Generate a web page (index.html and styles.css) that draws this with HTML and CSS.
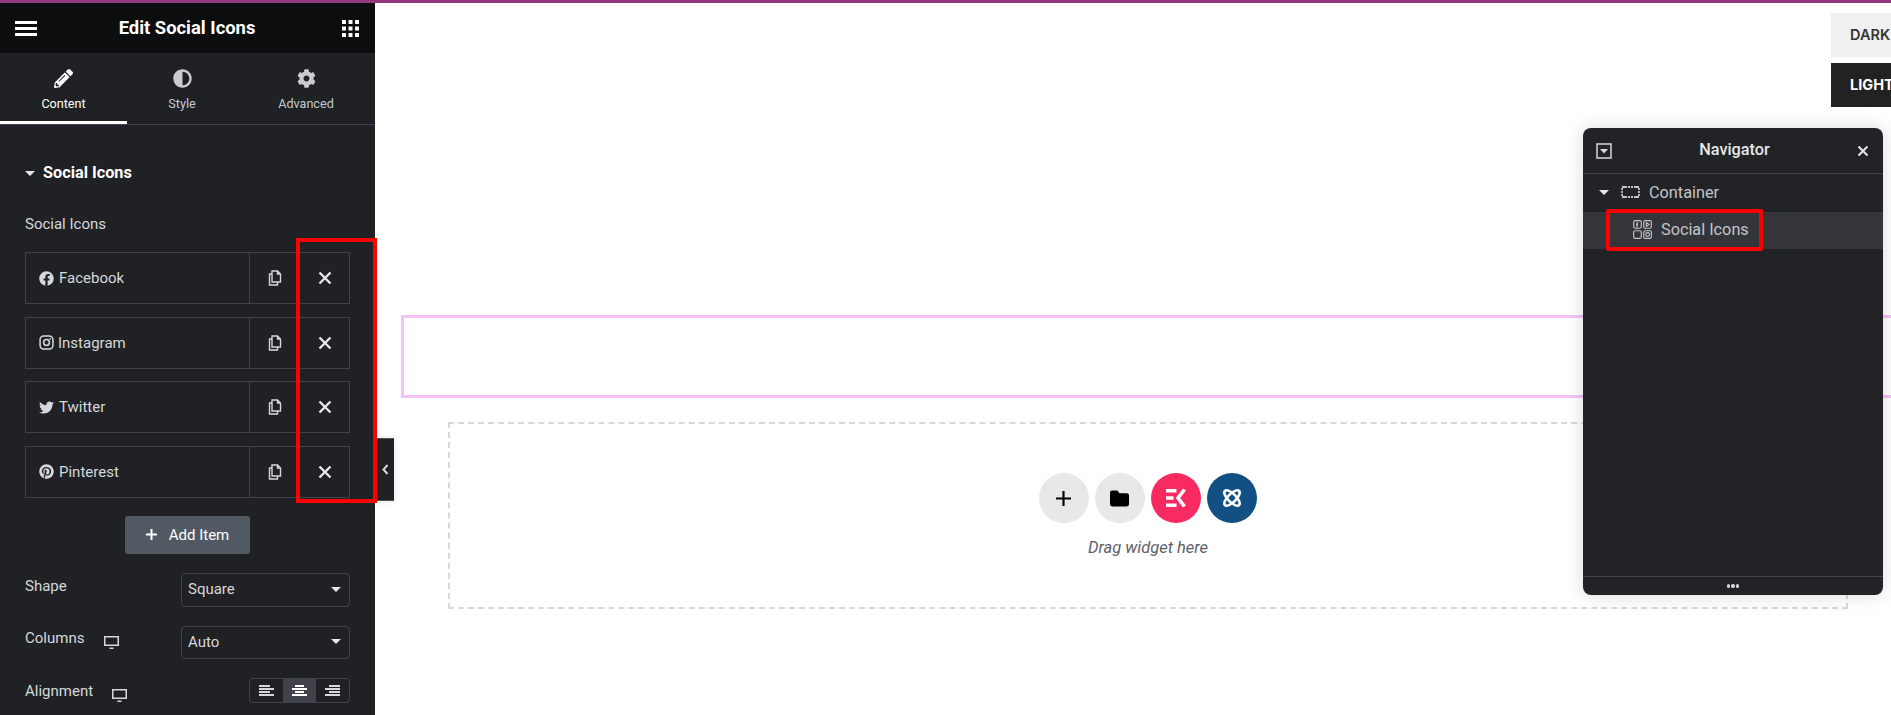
FILE: index.html
```html
<!DOCTYPE html>
<html lang="en">
<head>
    <meta charset="UTF-8">
    <meta name="viewport" content="width=device-width, initial-scale=1.0">
    <title>Edit Social Icons</title>
    <link rel="stylesheet" href="styles.css">
</head>
<body>
    <div class="top-line"></div>
    <div class="app">
        <aside class="panel">
            <header class="panel-header">
                <div class="burger"><span></span><span></span><span></span></div>
                <h1>Edit Social Icons</h1>
                <svg class="apps" viewBox="0 0 17 17" fill="#fff"><rect x="0" y="0" width="4" height="4"/><rect x="6.5" y="0" width="4" height="4"/><rect x="13" y="0" width="4" height="4"/><rect x="0" y="6.5" width="4" height="4"/><rect x="6.5" y="6.5" width="4" height="4"/><rect x="13" y="6.5" width="4" height="4"/><rect x="0" y="13" width="4" height="4"/><rect x="6.5" y="13" width="4" height="4"/><rect x="13" y="13" width="4" height="4"/></svg>
            </header>

            <nav class="tabs">
                <div class="tab active">
                    <svg viewBox="0 0 512 512"><path d="M497.9 142.1l-46.1 46.1c-4.7 4.7-12.3 4.7-17 0l-111-111c-4.7-4.7-4.7-12.3 0-17l46.1-46.1c18.7-18.7 49.1-18.7 67.9 0l60.1 60.1c18.8 18.7 18.8 49.1 0 67.9zM284.2 99.8L21.6 362.4.4 483.9c-2.9 16.4 11.4 30.6 27.8 27.8l121.5-21.3 262.6-262.6c4.7-4.7 4.7-12.3 0-17l-111-111c-4.8-4.7-12.4-4.7-17.1 0zM124.1 339.9c-5.5-5.5-5.5-14.3 0-19.8l154-154c5.5-5.5 14.3-5.5 19.8 0s5.5 14.3 0 19.8l-154 154c-5.5 5.5-14.3 5.5-19.8 0zM88 424h48v36.3l-64.5 11.3-31.1-31.1L51.7 376H88v48z"/></svg>
                    <span>Content</span>
                </div>
                <div class="tab">
                    <svg viewBox="0 0 512 512"><path d="M8 256c0 136.966 111.033 248 248 248s248-111.034 248-248S392.966 8 256 8 8 119.033 8 256zm248 184V72c101.705 0 184 82.311 184 184 0 101.705-82.311 184-184 184z"/></svg>
                    <span>Style</span>
                </div>
                <div class="tab">
                    <svg viewBox="0 0 512 512"><path d="M487.4 315.7l-42.6-24.6c4.3-23.2 4.3-47 0-70.2l42.6-24.6c4.9-2.8 7.1-8.6 5.5-14-11.1-35.6-30-67.8-54.7-94.6-3.8-4.1-10-5.1-14.8-2.3L380.8 110c-17.9-15.4-38.5-27.3-60.8-35.1V25.8c0-5.6-3.9-10.5-9.4-11.7-36.7-8.2-74.3-7.8-109.2 0-5.5 1.2-9.4 6.1-9.4 11.7V75c-22.2 7.9-42.8 19.8-60.8 35.1L88.7 85.5c-4.9-2.8-11-1.9-14.8 2.3-24.7 26.7-43.6 58.9-54.7 94.6-1.7 5.4.6 11.2 5.5 14L67.3 221c-4.3 23.2-4.3 47 0 70.2l-42.6 24.6c-4.9 2.8-7.1 8.6-5.5 14 11.1 35.6 30 67.8 54.7 94.6 3.8 4.1 10 5.1 14.8 2.3l42.6-24.6c17.9 15.4 38.5 27.3 60.8 35.1v49.2c0 5.6 3.9 10.5 9.4 11.7 36.7 8.2 74.3 7.8 109.2 0 5.5-1.2 9.4-6.1 9.4-11.7v-49.2c22.2-7.9 42.8-19.8 60.8-35.1l42.6 24.6c4.9 2.8 11 1.9 14.8-2.3 24.7-26.7 43.6-58.9 54.7-94.6 1.5-5.5-.7-11.3-5.6-14.1zM256 336c-44.1 0-80-35.9-80-80s35.9-80 80-80 80 35.9 80 80-35.9 80-80 80z"/></svg>
                    <span>Advanced</span>
                </div>
            </nav>

            <div class="panel-body">
                <div class="section-title"><i class="caret"></i>Social Icons</div>
                <div class="field-label">Social Icons</div>

                <div class="repeater">
                    <div class="item">
                        <div class="item-title">
                            <svg class="brand" viewBox="0 0 512 512"><path d="M504 256C504 119 393 8 256 8S8 119 8 256c0 123.78 90.69 226.38 209.25 245V327.69h-63V256h63v-54.64c0-62.15 37-96.48 93.67-96.48 27.14 0 55.52 4.84 55.52 4.84v61h-31.28c-30.8 0-40.41 19.12-40.41 38.73V256h68.78l-11 71.69h-57.78V501C413.31 482.38 504 379.78 504 256z"/></svg>
                            <span>Facebook</span>
                        </div>
                        <div class="item-tool"><svg class="copy" viewBox="0 0 14 16"><path d="M4 1h5.500l3 3v8h-8.500zM9.500 1v3h3M4 4H1.500v11h8V12"/></svg></div>
                        <div class="item-tool"><svg class="remove" viewBox="0 0 14 14"><path d="M1.500 1.500l11 11M12.500 1.500l-11 11"/></svg></div>
                    </div>
                    <div class="item">
                        <div class="item-title tight">
                            <svg class="brand insta" viewBox="0 0 14 14"><rect x="1" y="1" width="12" height="12" rx="3.3"/><circle cx="7" cy="7" r="2.7"/><circle class="dot" cx="10.4" cy="3.6" r=".8"/></svg>
                            <span>Instagram</span>
                        </div>
                        <div class="item-tool"><svg class="copy" viewBox="0 0 14 16"><path d="M4 1h5.500l3 3v8h-8.500zM9.500 1v3h3M4 4H1.500v11h8V12"/></svg></div>
                        <div class="item-tool"><svg class="remove" viewBox="0 0 14 14"><path d="M1.500 1.500l11 11M12.500 1.500l-11 11"/></svg></div>
                    </div>
                    <div class="item">
                        <div class="item-title">
                            <svg class="brand" viewBox="0 0 512 512"><path d="M459.37 151.716c.325 4.548.325 9.097.325 13.645 0 138.72-105.583 298.558-298.558 298.558-59.452 0-114.68-17.219-161.137-47.106 8.447.974 16.568 1.299 25.34 1.299 49.055 0 94.213-16.568 130.274-44.832-46.132-.975-84.792-31.188-98.112-72.772 6.498.974 12.995 1.624 19.818 1.624 9.421 0 18.843-1.3 27.614-3.573-48.081-9.747-84.143-51.98-84.143-102.985v-1.299c13.969 7.797 30.214 12.67 47.431 13.319-28.264-18.843-46.781-51.005-46.781-87.391 0-19.492 5.197-37.36 14.294-52.954 51.655 63.675 129.3 105.258 216.365 109.807-1.624-7.797-2.599-15.918-2.599-24.04 0-57.828 46.782-104.934 104.934-104.934 30.213 0 57.502 12.67 76.67 33.137 23.715-4.548 46.456-13.645 66.599-25.667-7.798 24.366-24.366 44.833-46.132 57.827 21.117-2.273 41.584-8.122 60.426-16.243-14.292 20.791-32.161 39.308-52.628 54.253z"/></svg>
                            <span>Twitter</span>
                        </div>
                        <div class="item-tool"><svg class="copy" viewBox="0 0 14 16"><path d="M4 1h5.500l3 3v8h-8.500zM9.500 1v3h3M4 4H1.500v11h8V12"/></svg></div>
                        <div class="item-tool"><svg class="remove" viewBox="0 0 14 14"><path d="M1.500 1.500l11 11M12.500 1.500l-11 11"/></svg></div>
                    </div>
                    <div class="item">
                        <div class="item-title">
                            <svg class="brand" viewBox="0 0 496 512"><path d="M496 256c0 137-111 248-248 248-25.6 0-50.2-3.9-73.4-11.1 10.1-16.5 25.2-43.5 30.8-65 3-11.6 15.4-59 15.4-59 8.1 15.4 31.7 28.5 56.8 28.5 74.8 0 128.7-68.8 128.7-154.3 0-81.9-66.9-143.2-152.9-143.2-107 0-163.9 71.8-163.9 150.1 0 36.4 19.4 81.7 50.3 96.1 4.7 2.2 7.2 1.2 8.3-3.3.8-3.4 5-20.3 6.9-28.1.6-2.5.3-4.7-1.7-7.1-10.1-12.5-18.3-35.3-18.3-56.6 0-54.7 41.4-107.6 112-107.6 60.9 0 103.6 41.5 103.6 100.9 0 67.1-33.9 113.6-78 113.6-24.3 0-42.6-20.1-36.7-44.8 7-29.5 20.5-61.3 20.5-82.6 0-19-10.2-34.9-31.4-34.9-24.9 0-44.9 25.7-44.9 60.2 0 22 7.4 36.8 7.4 36.8s-24.5 103.8-29 123.2c-5 21.4-3 51.6-.9 71.2C65.4 450.9 0 361.1 0 256 0 119 111 8 248 8s248 111 248 248z"/></svg>
                            <span>Pinterest</span>
                        </div>
                        <div class="item-tool"><svg class="copy" viewBox="0 0 14 16"><path d="M4 1h5.500l3 3v8h-8.500zM9.500 1v3h3M4 4H1.500v11h8V12"/></svg></div>
                        <div class="item-tool"><svg class="remove" viewBox="0 0 14 14"><path d="M1.500 1.500l11 11M12.500 1.500l-11 11"/></svg></div>
                    </div>
                </div>

                <button class="add-item" type="button">
                    <svg viewBox="0 0 12 12"><path d="M6 0v12M0 6h12"/></svg>
                    Add Item
                </button>

                <div class="control control-shape">
                    <div class="control-label">Shape</div>
                    <div class="select">Square<i class="caret"></i></div>
                </div>
                <div class="control control-columns">
                    <div class="control-label">Columns
                        <svg class="device" viewBox="0 0 15 13"><path d="M0 0h15v10H0zM1.500 1.500v7h12v-7zM5.500 11.500h4V13h-4z" fill-rule="evenodd"/></svg>
                    </div>
                    <div class="select">Auto<i class="caret"></i></div>
                </div>
                <div class="control control-align">
                    <div class="control-label">Alignment
                        <svg class="device" viewBox="0 0 15 13"><path d="M0 0h15v10H0zM1.500 1.500v7h12v-7zM5.500 11.500h4V13h-4z" fill-rule="evenodd"/></svg>
                    </div>
                    <div class="align-group">
                        <div class="align-cell"><svg viewBox="0 0 15 11"><path d="M0 0h11v2H0zM0 3h15v2H0zM0 6h11v2H0zM0 9h15v2H0z"/></svg></div>
                        <div class="align-cell on"><svg viewBox="0 0 15 11"><path d="M3 0h9v2H3zM0 3h15v2H0zM3 6h9v2H3zM0 9h15v2H0z"/></svg></div>
                        <div class="align-cell"><svg viewBox="0 0 15 11"><path d="M4 0h11v2H4zM0 3h15v2H0zM4 6h11v2H4zM0 9h15v2H0z"/></svg></div>
                    </div>
                </div>
            </div>

            <div class="panel-toggle">
                <svg viewBox="0 0 7 11"><path d="M5.500 1L1.500 5.500l4 4.500"/></svg>
            </div>
        </aside>

        <main class="canvas">
            <section class="container-box"></section>
            <section class="dropzone">
                <div class="drop-buttons">
                    <div class="drop-btn grey">
                        <svg class="plus" viewBox="0 0 14 14"><path d="M7 0v14M0 7h14"/></svg>
                    </div>
                    <div class="drop-btn grey">
                        <svg viewBox="0 0 18 15"><path class="solid" d="M2 0h5l2 2.500h7a2 2 0 0 1 2 2V13a2 2 0 0 1-2 2H2a2 2 0 0 1-2-2V2a2 2 0 0 1 2-2z"/></svg>
                    </div>
                    <div class="drop-btn pink">
                        <svg viewBox="0 0 20 20"><path class="solid-white" d="M0 1h10.500v3.400H0zM0 8.300h7.500v3.400H0zM0 15.600h10.500V19H0z"/><path class="white-line" d="M18.500 1.500L12 10l6.500 8.500"/></svg>
                    </div>
                    <div class="drop-btn blue">
                        <svg viewBox="0 0 24 24"><ellipse cx="12" cy="12" rx="11" ry="4.500" transform="rotate(45 12 12)"/><ellipse cx="12" cy="12" rx="11" ry="4.500" transform="rotate(-45 12 12)"/></svg>
                    </div>
                </div>
                <p class="drop-hint">Drag widget here</p>
            </section>
        </main>

        <div class="switcher">
            <div class="switch dark">DARK</div>
            <div class="switch light">LIGHT</div>
        </div>

        <div class="navigator">
            <div class="nav-head">
                <svg class="nav-min" viewBox="0 0 16 16"><rect x="1" y="1" width="14" height="14"/><path class="fill" d="M4 6h8l-4 4.500z"/></svg>
                <span>Navigator</span>
                <svg class="nav-close" viewBox="0 0 12 12"><path d="M1.500 1.500l9 9M10.500 1.500l-9 9"/></svg>
            </div>
            <div class="nav-tree">
                <div class="nav-row">
                    <i class="caret"></i>
                    <svg class="nav-box" viewBox="0 0 19 12"><rect x="1" y="1" width="17" height="10" stroke-dasharray="2 1"/><path d="M1 1h3M15 1h3M1 11h3M15 11h3"/></svg>
                    <span>Container</span>
                </div>
                <div class="nav-row selected">
                    <svg class="nav-social" viewBox="0 0 20 20"><rect x=".7" y=".7" width="8" height="8" rx="1.5"/><rect x="11.3" y=".7" width="8" height="8" rx="1.5"/><rect x=".7" y="11.3" width="8" height="8" rx="1.5"/><rect x="11.3" y="11.3" width="8" height="8" rx="1.5"/><circle cx="15.3" cy="15.3" r="2"/><path d="M5.500 3H4.200v5M3 5h2.500M14 2.700v4l3-2z"/></svg>
                    <span>Social Icons</span>
                </div>
            </div>
            <div class="nav-foot"><i></i><i></i><i></i></div>
        </div>

        <div class="mark mark-remove"></div>
        <div class="mark mark-nav"></div>
    </div>
</body>
</html>
```

FILE: styles.css
```css
* {
    box-sizing: border-box;
}
html, body {
    margin: 0;
    padding: 0;
    height: 715px;
    overflow: hidden;
}
body {
    font-family: 'Roboto', sans-serif;
    background-color: #fff;
    color: #d5d8dc;
}
.top-line {
    height: 3px;
    background-color: #93387f;
}
.app {
    position: relative;
    display: flex;
    height: 712px;
}

/* left panel */
.panel {
    position: relative;
    flex: 0 0 375px;
    background-color: #1f2124;
}
.panel-header {
    height: 50px;
    display: flex;
    align-items: center;
    justify-content: space-between;
    padding: 0 16px 0 15px;
    background-color: #0c0d0e;
}
.panel-header h1 {
    margin: 0 0 2px -5px;
    font-size: 18.4px;
    font-weight: 700;
    color: #fff;
}
.burger {
    width: 22px;
}
.burger span {
    display: block;
    height: 3px;
    margin: 3px 0;
    background-color: #fff;
}
.apps {
    width: 17px;
    height: 17px;
}
.tabs {
    display: grid;
    grid-template-columns: 127px 110px 138px;
    height: 72px;
    border-bottom: 1px solid #3f444b;
}
.tab {
    display: flex;
    flex-direction: column;
    align-items: center;
    padding-top: 16px;
    font-size: 12.6px;
    line-height: 16px;
    color: #c2cbd2;
}
.tab svg {
    width: 19px;
    height: 19px;
    margin-bottom: 8px;
    fill: #c8ccd0;
}
.tab.active {
    height: 71px;
    color: #fff;
    border-bottom: 3px solid #fff;
}
.tab.active svg {
    fill: #fff;
}
.panel-body {
    padding: 38px 25px 0;
}
.section-title {
    display: flex;
    align-items: center;
    font-size: 16.25px;
    font-weight: 700;
    line-height: 20px;
    color: #fff;
}
.section-title .caret {
    margin-right: 8px;
}
.caret {
    display: inline-block;
    width: 0;
    height: 0;
    border-left: 5.5px solid transparent;
    border-right: 5.5px solid transparent;
    border-top: 5.5px solid #e6e8ea;
}
.field-label {
    margin-top: 32px;
    font-size: 15px;
    line-height: 18px;
}
.repeater {
    display: flex;
    flex-direction: column;
    gap: 12.5px;
    margin-top: 19px;
}
.item {
    display: flex;
    height: 52px;
    border: 1px solid #3f444b;
    font-size: 15px;
}
.item-title {
    flex: 1;
    display: flex;
    align-items: center;
    gap: 5px;
    padding-left: 13px;
}
.item-title.tight {
    gap: 4px;
}
.brand {
    width: 15px;
    height: 15px;
    fill: #d5d8dc;
}
.brand.insta {
    fill: none;
    stroke: #d5d8dc;
    stroke-width: 1.4;
}
.brand .dot {
    fill: #d5d8dc;
    stroke: none;
}
.item-tool {
    flex: 0 0 50px;
    display: flex;
    align-items: center;
    justify-content: center;
    border-left: 1px solid #3f444b;
}
.copy {
    width: 14px;
    height: 16px;
    fill: none;
    stroke: #d5d8dc;
    stroke-width: 1.4;
}
.remove {
    width: 14px;
    height: 14px;
    fill: none;
    stroke: #e6e8ea;
    stroke-width: 2.4;
}
.add-item {
    display: flex;
    align-items: center;
    justify-content: center;
    gap: 12px;
    width: 125px;
    height: 38px;
    margin: 18px auto 0;
    background-color: #515962;
    border: none;
    border-radius: 3px;
    font-family: inherit;
    font-size: 15px;
    color: #fff;
}
.add-item svg {
    width: 11px;
    height: 11px;
    fill: none;
    stroke: #fff;
    stroke-width: 2.2;
}
.control {
    display: flex;
    justify-content: space-between;
    align-items: flex-start;
    margin-top: 19px;
}
.control-label {
    display: flex;
    align-items: flex-start;
    padding-top: 4px;
    font-size: 15px;
    line-height: 18px;
}
.control-columns .control-label {
    padding-top: 3px;
}
.device {
    width: 15px;
    height: 13px;
    margin: 7px 0 0 19px;
    fill: #d5d8dc;
}
.control-columns .device {
    margin-left: 20px;
}
.select {
    display: flex;
    align-items: center;
    justify-content: space-between;
    width: 169px;
    height: 34px;
    padding: 0 8px 1px 6px;
    border: 1px solid #3f444b;
    border-radius: 4px;
    font-size: 15px;
}
.control-columns .select {
    height: 33px;
}
.align-group {
    display: grid;
    grid-template-columns: repeat(3, 1fr);
    width: 101px;
    height: 25px;
    border: 1px solid #3f444b;
    border-radius: 4px;
    overflow: hidden;
}
.align-cell {
    display: flex;
    align-items: center;
    justify-content: center;
}
.align-cell.on {
    background-color: #404349;
}
.align-cell svg {
    width: 15px;
    height: 11px;
    fill: #d5d8dc;
}
.align-cell.on svg {
    fill: #fff;
}
.panel-toggle {
    position: absolute;
    left: 100%;
    top: 435px;
    width: 19px;
    height: 63px;
    display: flex;
    align-items: center;
    justify-content: center;
    padding-left: 2px;
    background-color: #1f2124;
    border-top: 1px solid #4d5158;
    border-bottom: 1px solid #4d5158;
    box-shadow: 0 0 8px rgba(0, 0, 0, 0.1);
}
.panel-toggle svg {
    width: 7px;
    height: 11px;
    fill: none;
    stroke: #d5d8dc;
    stroke-width: 2;
}

/* page being edited */
.canvas {
    flex: 1;
    min-width: 0;
    padding-top: 312px;
}
.container-box {
    height: 83px;
    margin-left: 26px;
    border: 3px solid #f5c2fa;
    border-right: none;
}
.dropzone {
    display: flex;
    flex-direction: column;
    align-items: center;
    height: 187px;
    margin: 24px 43px 0 73px;
    padding-top: 49px;
    border: 2px dashed #d5d8dc;
}
.drop-buttons {
    display: flex;
    gap: 6.3px;
}
.drop-btn {
    width: 50px;
    height: 50px;
    display: flex;
    align-items: center;
    justify-content: center;
    border-radius: 50%;
}
.drop-btn.grey {
    background-color: #e6e8ea;
}
.drop-btn.pink {
    background-color: #f72b61;
}
.drop-btn.blue {
    background-color: #124f83;
}
.drop-btn svg {
    width: 19px;
    height: 19px;
    fill: none;
    stroke: #000;
}
.drop-btn .plus {
    width: 15px;
    height: 15px;
    stroke-width: 2;
}
.drop-btn .solid {
    fill: #000;
    stroke: none;
}
.drop-btn.pink svg {
    width: 20px;
    height: 20px;
}
.drop-btn .solid-white {
    fill: #fff;
    stroke: none;
}
.drop-btn .white-line {
    stroke: #fff;
    stroke-width: 3.6;
}
.drop-btn.blue svg {
    width: 22px;
    height: 22px;
    stroke: #fff;
    stroke-width: 2.8;
}
.drop-hint {
    margin: 15px 0 0;
    font-size: 16.5px;
    font-style: italic;
    line-height: 20px;
    color: #5c6068;
}

/* dark / light switcher */
.switcher {
    position: absolute;
    top: 10px;
    right: 0;
    width: 60px;
    display: flex;
    flex-direction: column;
    gap: 6px;
}
.switch {
    height: 44px;
    line-height: 44px;
    padding-left: 19px;
    font-family: 'Inter', sans-serif;
    font-size: 14.5px;
    font-weight: 600;
    white-space: nowrap;
    overflow: hidden;
}
.switch.dark {
    background-color: #f0f0f0;
    color: #333;
}
.switch.light {
    background-color: #222;
    color: #fff;
    font-weight: 700;
}

/* navigator */
.navigator {
    position: absolute;
    top: 125px;
    right: 8px;
    width: 300px;
    height: 467px;
    display: flex;
    flex-direction: column;
    background-color: #222327;
    border-radius: 8px;
    box-shadow: 0 0 20px rgba(0, 0, 0, 0.15);
}
.nav-head {
    flex: 0 0 46px;
    display: flex;
    align-items: center;
    justify-content: space-between;
    padding: 0 14px 0 13px;
    border-bottom: 1px solid #3f444b;
    font-size: 16.25px;
    font-weight: 500;
    color: #e6e8ea;
}
.nav-head span {
    margin-bottom: 2px;
}
.nav-min {
    width: 16px;
    height: 16px;
    fill: none;
    stroke: #d5d8dc;
    stroke-width: 1.5;
}
.nav-min .fill {
    fill: #d5d8dc;
    stroke: none;
}
.nav-close {
    width: 12px;
    height: 12px;
    fill: none;
    stroke: #e6e8ea;
    stroke-width: 2;
}
.nav-tree {
    flex: 1;
}
.nav-row {
    display: flex;
    align-items: center;
    height: 38px;
    padding: 0 0 2px 16px;
    font-size: 16.25px;
    color: #c2c5c9;
}
.nav-row .caret {
    margin-right: 12px;
}
.nav-box {
    width: 19px;
    height: 12px;
    margin-right: 9px;
    fill: none;
    stroke: #c2c5c9;
    stroke-width: 1.8;
}
.nav-row.selected {
    height: 37px;
    padding-left: 50px;
    background-color: #34353a;
}
.nav-social {
    width: 19px;
    height: 19px;
    margin-right: 9px;
    fill: none;
    stroke: #c2c5c9;
    stroke-width: 1.2;
}
.nav-foot {
    flex: 0 0 19px;
    display: flex;
    align-items: center;
    justify-content: center;
    gap: 1px;
    border-top: 1px solid #3f444b;
}
.nav-foot i {
    width: 3.5px;
    height: 3.5px;
    border-radius: 50%;
    background-color: #d5d8dc;
}

/* red annotation boxes from the screenshot */
.mark {
    position: absolute;
    border: 4px solid #f00;
}
.mark-remove {
    left: 296px;
    top: 235px;
    width: 81px;
    height: 265px;
}
.mark-nav {
    left: 1606px;
    top: 206px;
    width: 157px;
    height: 42px;
    border-radius: 2px;
}
```
